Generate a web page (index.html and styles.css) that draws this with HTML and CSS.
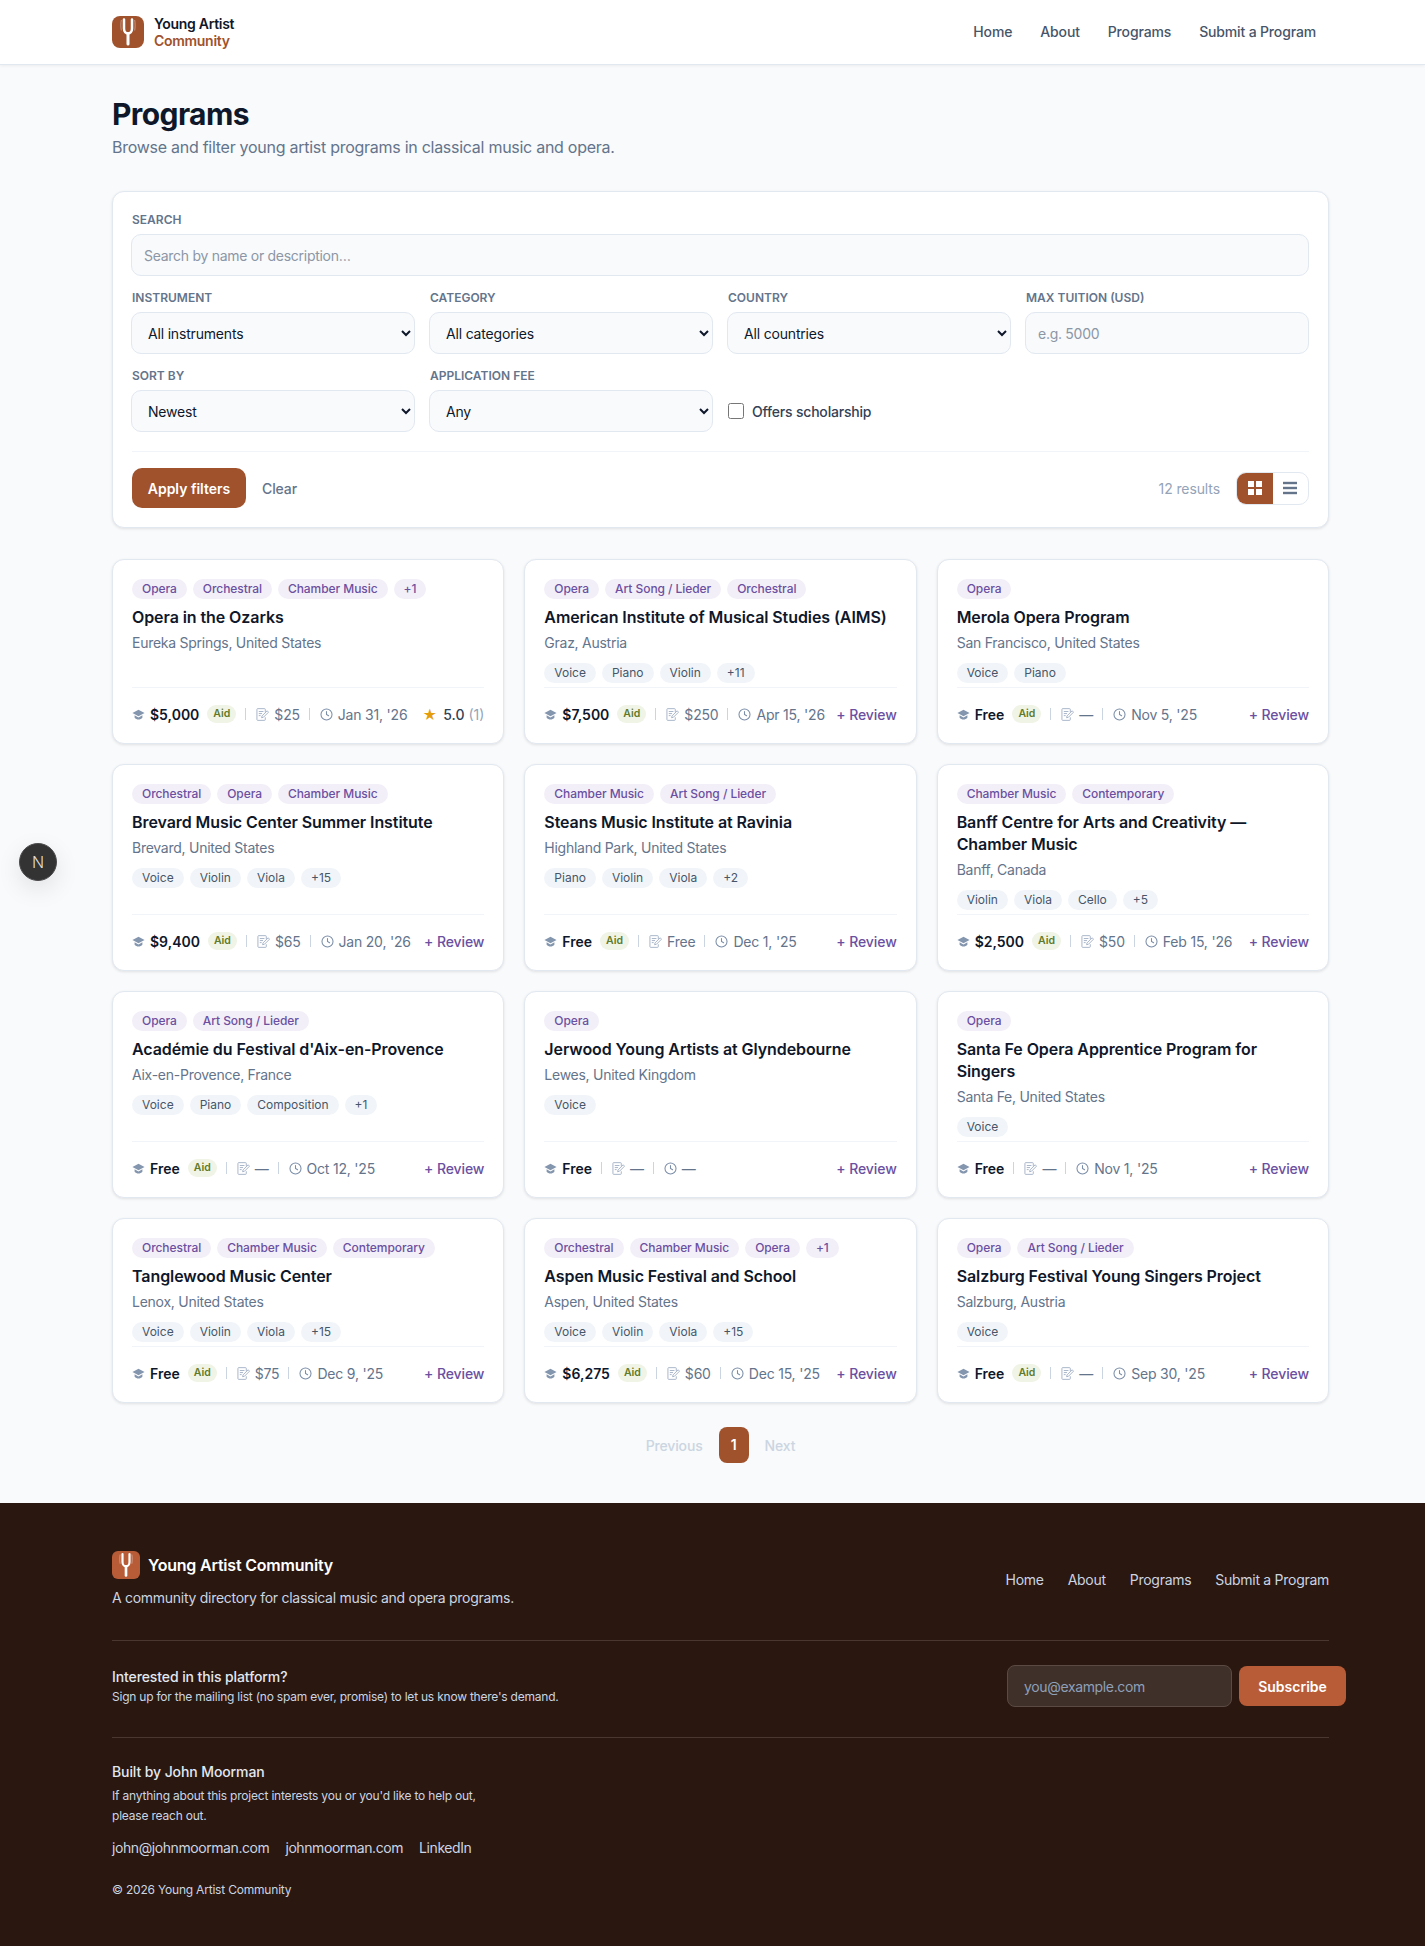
FILE: index.html
```html
<!DOCTYPE html>
<html lang="en">
<head>
  <meta charset="UTF-8" />
  <title>Programs - Young Artist Community</title>
  <link rel="stylesheet" href="styles.css">
</head>
<body>

  <svg class="sprite" width="0" height="0">
    <symbol id="fork" viewBox="0 0 32 32">
      <path d="M9.300 4c-.6 3.500-.6 7 0 10.500M22.700 4c.6 3.500.6 7 0 10.500" fill="none" stroke="#fff" stroke-opacity=".4" stroke-width="1"/>
      <path d="M12 3.500V12.500c0 3 1.800 5 4 5s4-2 4-5V3.500" fill="none" stroke="#fff" stroke-width="2.500" stroke-linecap="round"/>
      <path d="M16 17.500V28" fill="none" stroke="#fff" stroke-width="3" stroke-linecap="round"/>
    </symbol>
    <symbol id="cap" viewBox="0 0 14 14">
      <path d="M7 2 .5 5.500 7 9l6.500-3.500z" fill="#8496ae"/>
      <path d="M2.800 7.900v2.600c1 1.200 2.600 1.900 4.200 1.900s3.200-.7 4.200-1.900V7.900L7 10.200z" fill="#8496ae"/>
    </symbol>
    <symbol id="doc" viewBox="0 0 14 14">
      <path d="M10 4.500V1.500a.8.8 0 0 0-.8-.8H1.800a.8.8 0 0 0-.8.800v11a.8.8 0 0 0 .8.800h7.400a.8.8 0 0 0 .8-.8V10M3 3.800h5M3 6h3.500M3 8.200h2" fill="none" stroke="#a3b1c6" stroke-width="1"/>
      <path d="M6 10.500l.5-2 5.500-5.500 1.500 1.500L8 10z" fill="none" stroke="#a3b1c6" stroke-width="1"/>
    </symbol>
    <symbol id="clock" viewBox="0 0 16 16">
      <circle cx="8" cy="8" r="6.800" fill="none" stroke="#7b8ea8" stroke-width="1.300"/>
      <path d="M8 4.200V8l2.600 1.500" fill="none" stroke="#7b8ea8" stroke-width="1.300" stroke-linecap="round"/>
    </symbol>
  </svg>

  <header class="site-header">
    <a class="brand" href="#">
      <span class="brand-mark"><svg width="32" height="32"><use href="#fork"/></svg></span>
      <span class="brand-name">Young Artist<em>Community</em></span>
    </a>
    <nav class="site-nav">
      <a href="#">Home</a>
      <a href="#">About</a>
      <a href="#">Programs</a>
      <a href="#">Submit a Program</a>
    </nav>
  </header>

  <main class="page">
    <h1>Programs</h1>
    <p class="lead">Browse and filter young artist programs in classical music and opera.</p>

    <form class="filters">
      <div class="field field-search">
        <label>Search</label>
        <input type="text" placeholder="Search by name or description…" />
      </div>
      <div class="filter-grid">
        <div class="field">
          <label>Instrument</label>
          <select><option>All instruments</option></select>
        </div>
        <div class="field">
          <label>Category</label>
          <select><option>All categories</option></select>
        </div>
        <div class="field">
          <label>Country</label>
          <select><option>All countries</option></select>
        </div>
        <div class="field">
          <label>Max tuition (USD)</label>
          <input type="text" placeholder="e.g. 5000" />
        </div>
        <div class="field">
          <label>Sort by</label>
          <select><option>Newest</option></select>
        </div>
        <div class="field">
          <label>Application fee</label>
          <select><option>Any</option></select>
        </div>
        <label class="check"><input type="checkbox" /> Offers scholarship</label>
      </div>
      <div class="filter-actions">
        <button class="btn-apply" type="button">Apply filters</button>
        <a class="clear" href="#">Clear</a>
        <span class="count">12 results</span>
        <div class="view-toggle">
          <span class="view-btn active">
            <svg width="14" height="14" viewBox="0 0 14 14" fill="#fff"><rect width="6" height="6"/><rect x="8" width="6" height="6"/><rect y="8" width="6" height="6"/><rect x="8" y="8" width="6" height="6"/></svg>
          </span>
          <span class="view-btn">
            <svg width="14" height="14" viewBox="0 0 14 14" fill="#64748b"><rect y=".8" width="14" height="2.400"/><rect y="5.800" width="14" height="2.400"/><rect y="10.800" width="14" height="2.400"/></svg>
          </span>
        </div>
      </div>
    </form>

    <section class="cards">

      <article class="card">
        <div class="tags"><span>Opera</span><span>Orchestral</span><span>Chamber Music</span><span>+1</span></div>
        <h2>Opera in the Ozarks</h2>
        <p class="place">Eureka Springs, United States</p>
        <div class="meta">
          <svg class="ico"><use href="#cap"/></svg><b>$5,000</b><i class="aid">Aid</i>
          <u></u><svg class="ico"><use href="#doc"/></svg><span>$25</span>
          <u></u><svg class="ico"><use href="#clock"/></svg><span>Jan 31, '26</span>
          <span class="rating"><s>★</s><strong>5.0</strong> <small>(1)</small></span>
        </div>
      </article>

      <article class="card">
        <div class="tags"><span>Opera</span><span>Art Song / Lieder</span><span>Orchestral</span></div>
        <h2>American Institute of Musical Studies (AIMS)</h2>
        <p class="place">Graz, Austria</p>
        <div class="chips"><span>Voice</span><span>Piano</span><span>Violin</span><span>+11</span></div>
        <div class="meta">
          <svg class="ico"><use href="#cap"/></svg><b>$7,500</b><i class="aid">Aid</i>
          <u></u><svg class="ico"><use href="#doc"/></svg><span>$250</span>
          <u></u><svg class="ico"><use href="#clock"/></svg><span>Apr 15, '26</span>
          <a class="review" href="#">+ Review</a>
        </div>
      </article>

      <article class="card">
        <div class="tags"><span>Opera</span></div>
        <h2>Merola Opera Program</h2>
        <p class="place">San Francisco, United States</p>
        <div class="chips"><span>Voice</span><span>Piano</span></div>
        <div class="meta">
          <svg class="ico"><use href="#cap"/></svg><b>Free</b><i class="aid">Aid</i>
          <u></u><svg class="ico"><use href="#doc"/></svg><span>—</span>
          <u></u><svg class="ico"><use href="#clock"/></svg><span>Nov 5, '25</span>
          <a class="review" href="#">+ Review</a>
        </div>
      </article>

      <article class="card">
        <div class="tags"><span>Orchestral</span><span>Opera</span><span>Chamber Music</span></div>
        <h2>Brevard Music Center Summer Institute</h2>
        <p class="place">Brevard, United States</p>
        <div class="chips"><span>Voice</span><span>Violin</span><span>Viola</span><span>+15</span></div>
        <div class="meta">
          <svg class="ico"><use href="#cap"/></svg><b>$9,400</b><i class="aid">Aid</i>
          <u></u><svg class="ico"><use href="#doc"/></svg><span>$65</span>
          <u></u><svg class="ico"><use href="#clock"/></svg><span>Jan 20, '26</span>
          <a class="review" href="#">+ Review</a>
        </div>
      </article>

      <article class="card">
        <div class="tags"><span>Chamber Music</span><span>Art Song / Lieder</span></div>
        <h2>Steans Music Institute at Ravinia</h2>
        <p class="place">Highland Park, United States</p>
        <div class="chips"><span>Piano</span><span>Violin</span><span>Viola</span><span>+2</span></div>
        <div class="meta">
          <svg class="ico"><use href="#cap"/></svg><b>Free</b><i class="aid">Aid</i>
          <u></u><svg class="ico"><use href="#doc"/></svg><span>Free</span>
          <u></u><svg class="ico"><use href="#clock"/></svg><span>Dec 1, '25</span>
          <a class="review" href="#">+ Review</a>
        </div>
      </article>

      <article class="card">
        <div class="tags"><span>Chamber Music</span><span>Contemporary</span></div>
        <h2>Banff Centre for Arts and Creativity — Chamber Music</h2>
        <p class="place">Banff, Canada</p>
        <div class="chips"><span>Violin</span><span>Viola</span><span>Cello</span><span>+5</span></div>
        <div class="meta">
          <svg class="ico"><use href="#cap"/></svg><b>$2,500</b><i class="aid">Aid</i>
          <u></u><svg class="ico"><use href="#doc"/></svg><span>$50</span>
          <u></u><svg class="ico"><use href="#clock"/></svg><span>Feb 15, '26</span>
          <a class="review" href="#">+ Review</a>
        </div>
      </article>

      <article class="card">
        <div class="tags"><span>Opera</span><span>Art Song / Lieder</span></div>
        <h2>Académie du Festival d'Aix-en-Provence</h2>
        <p class="place">Aix-en-Provence, France</p>
        <div class="chips"><span>Voice</span><span>Piano</span><span>Composition</span><span>+1</span></div>
        <div class="meta">
          <svg class="ico"><use href="#cap"/></svg><b>Free</b><i class="aid">Aid</i>
          <u></u><svg class="ico"><use href="#doc"/></svg><span>—</span>
          <u></u><svg class="ico"><use href="#clock"/></svg><span>Oct 12, '25</span>
          <a class="review" href="#">+ Review</a>
        </div>
      </article>

      <article class="card">
        <div class="tags"><span>Opera</span></div>
        <h2>Jerwood Young Artists at Glyndebourne</h2>
        <p class="place">Lewes, United Kingdom</p>
        <div class="chips"><span>Voice</span></div>
        <div class="meta">
          <svg class="ico"><use href="#cap"/></svg><b>Free</b>
          <u></u><svg class="ico"><use href="#doc"/></svg><span>—</span>
          <u></u><svg class="ico"><use href="#clock"/></svg><span>—</span>
          <a class="review" href="#">+ Review</a>
        </div>
      </article>

      <article class="card">
        <div class="tags"><span>Opera</span></div>
        <h2>Santa Fe Opera Apprentice Program for Singers</h2>
        <p class="place">Santa Fe, United States</p>
        <div class="chips"><span>Voice</span></div>
        <div class="meta">
          <svg class="ico"><use href="#cap"/></svg><b>Free</b>
          <u></u><svg class="ico"><use href="#doc"/></svg><span>—</span>
          <u></u><svg class="ico"><use href="#clock"/></svg><span>Nov 1, '25</span>
          <a class="review" href="#">+ Review</a>
        </div>
      </article>

      <article class="card">
        <div class="tags"><span>Orchestral</span><span>Chamber Music</span><span>Contemporary</span></div>
        <h2>Tanglewood Music Center</h2>
        <p class="place">Lenox, United States</p>
        <div class="chips"><span>Voice</span><span>Violin</span><span>Viola</span><span>+15</span></div>
        <div class="meta">
          <svg class="ico"><use href="#cap"/></svg><b>Free</b><i class="aid">Aid</i>
          <u></u><svg class="ico"><use href="#doc"/></svg><span>$75</span>
          <u></u><svg class="ico"><use href="#clock"/></svg><span>Dec 9, '25</span>
          <a class="review" href="#">+ Review</a>
        </div>
      </article>

      <article class="card">
        <div class="tags"><span>Orchestral</span><span>Chamber Music</span><span>Opera</span><span>+1</span></div>
        <h2>Aspen Music Festival and School</h2>
        <p class="place">Aspen, United States</p>
        <div class="chips"><span>Voice</span><span>Violin</span><span>Viola</span><span>+15</span></div>
        <div class="meta">
          <svg class="ico"><use href="#cap"/></svg><b>$6,275</b><i class="aid">Aid</i>
          <u></u><svg class="ico"><use href="#doc"/></svg><span>$60</span>
          <u></u><svg class="ico"><use href="#clock"/></svg><span>Dec 15, '25</span>
          <a class="review" href="#">+ Review</a>
        </div>
      </article>

      <article class="card">
        <div class="tags"><span>Opera</span><span>Art Song / Lieder</span></div>
        <h2>Salzburg Festival Young Singers Project</h2>
        <p class="place">Salzburg, Austria</p>
        <div class="chips"><span>Voice</span></div>
        <div class="meta">
          <svg class="ico"><use href="#cap"/></svg><b>Free</b><i class="aid">Aid</i>
          <u></u><svg class="ico"><use href="#doc"/></svg><span>—</span>
          <u></u><svg class="ico"><use href="#clock"/></svg><span>Sep 30, '25</span>
          <a class="review" href="#">+ Review</a>
        </div>
      </article>

    </section>

    <nav class="pager">
      <span class="pager-off">Previous</span>
      <span class="pager-current">1</span>
      <span class="pager-off">Next</span>
    </nav>
  </main>

  <footer class="site-footer">
    <div class="foot-top">
      <div>
        <div class="foot-brand">
          <span class="foot-mark"><svg width="28" height="28"><use href="#fork"/></svg></span>
          Young Artist Community
        </div>
        <p class="foot-desc">A community directory for classical music and opera programs.</p>
      </div>
      <nav class="foot-nav">
        <a href="#">Home</a>
        <a href="#">About</a>
        <a href="#">Programs</a>
        <a href="#">Submit a Program</a>
      </nav>
    </div>
    <div class="foot-signup">
      <div>
        <h3>Interested in this platform?</h3>
        <p>Sign up for the mailing list (no spam ever, promise) to let us know there's demand.</p>
      </div>
      <form class="signup-form">
        <input type="text" placeholder="you@example.com" />
        <button type="button">Subscribe</button>
      </form>
    </div>
    <div class="foot-about">
      <h3>Built by John Moorman</h3>
      <p>If anything about this project interests you or you'd like to help out,<br>please reach out.</p>
      <div class="foot-links">
        <a href="#">john@johnmoorman.com</a>
        <a href="#">johnmoorman.com</a>
        <a href="#">LinkedIn</a>
      </div>
      <p class="copyright">© 2026 Young Artist Community</p>
    </div>
  </footer>

  <div class="dev-badge">N</div>

</body>
</html>
```

FILE: styles.css
```css
* {
  box-sizing: border-box;
}
html, body {
  overflow-x: hidden;
}
body {
  font-family: Inter, 'Liberation Sans', sans-serif;
  margin: 0;
  background-color: #f8fafc;
  color: #0f172a;
  font-size: 14px;
}
a {
  color: inherit;
  text-decoration: none;
}
.sprite {
  position: absolute;
}

/* header */
.site-header {
  height: 65px;
  background-color: #fff;
  border-bottom: 1px solid #e2e8f0;
  box-shadow: 0 1px 3px rgba(0,0,0,0.06);
  display: flex;
  align-items: center;
  justify-content: space-between;
  padding: 0 109px 0 112px;
}
.brand {
  display: flex;
  align-items: center;
  gap: 10px;
}
.brand-mark {
  width: 32px;
  height: 32px;
  border-radius: 8px;
  background-color: #a0522d;
  display: block;
}
.brand-mark svg, .foot-mark svg {
  display: block;
}
.brand-name {
  display: block;
  font-size: 14px;
  font-weight: 600;
  line-height: 17px;
  letter-spacing: -0.3px;
  padding-bottom: 1px;
}
.brand-name em {
  display: block;
  font-style: normal;
  color: #a0522d;
}
.site-nav {
  display: flex;
  gap: 28px;
  font-weight: 500;
  color: #475569;
  letter-spacing: -0.15px;
  padding-bottom: 1px;
}

/* page */
.page {
  padding: 31px 96px 0 112px;
}
h1 {
  font-size: 30px;
  line-height: 36px;
  font-weight: 700;
  letter-spacing: -0.6px;
  margin: 0;
}
.lead {
  font-size: 16px;
  line-height: 24px;
  color: #64748b;
  letter-spacing: -0.27px;
  margin: 3px 0 32px;
}

/* filters */
.filters {
  background-color: #fff;
  border: 1px solid #e2e8f0;
  border-radius: 12px;
  box-shadow: 0 1px 3px rgba(0,0,0,0.1);
  padding: 20px 19px 19px 18px;
  margin-bottom: 31px;
}
.field label {
  display: block;
  font-size: 12px;
  line-height: 16px;
  font-weight: 600;
  color: #64748b;
  text-transform: uppercase;
  padding-left: 1px;
  margin-bottom: 6px;
}
.field input, .field select {
  display: block;
  width: 100%;
  height: 42px;
  font-family: inherit;
  font-size: 14px;
  color: #0f172a;
  background-color: #f8fafc;
  border: 1px solid #e2e8f0;
  border-radius: 10px;
  padding: 0 12px;
}
.field input {
  letter-spacing: -0.28px;
}
.field select {
  letter-spacing: -0.18px;
}
.field input::placeholder {
  color: #8c96a5;
}
.field-search {
  margin-bottom: 14px;
}
.filter-grid {
  display: grid;
  grid-template-columns: repeat(4, 1fr);
  gap: 14px;
}
.check {
  display: flex;
  align-items: center;
  gap: 8px;
  font-size: 14px;
  font-weight: 500;
  color: #334155;
  letter-spacing: -0.2px;
  align-self: end;
  height: 42px;
  padding-left: 1px;
}
.check input {
  width: 16px;
  height: 16px;
  margin: 0;
}
.filter-actions {
  display: flex;
  align-items: center;
  border-top: 1px solid #f1f5f9;
  margin: 19px 0 0 1px;
  padding-top: 16px;
}
.btn-apply {
  height: 40px;
  width: 114px;
  font-family: inherit;
  font-size: 14px;
  font-weight: 600;
  color: #fff;
  background-color: #a0522d;
  border: none;
  border-radius: 10px;
}
.clear {
  margin-left: 16px;
  font-weight: 500;
  color: #64748b;
  letter-spacing: -0.1px;
}
.count {
  margin-left: auto;
  margin-right: 16px;
  color: #94a3b8;
  letter-spacing: -0.1px;
}
.view-toggle {
  display: flex;
  width: 73px;
  height: 33px;
  border: 1px solid #e2e8f0;
  border-radius: 10px;
  overflow: hidden;
}
.view-btn {
  flex: 1;
  display: flex;
  align-items: center;
  justify-content: center;
}
.view-btn.active {
  background-color: #a0522d;
}

/* program cards */
.cards {
  display: grid;
  grid-template-columns: repeat(3, 1fr);
  gap: 20px;
}
.card {
  display: flex;
  flex-direction: column;
  background-color: #fff;
  border: 1px solid #e2e8f0;
  border-radius: 12px;
  box-shadow: 0 1px 3px rgba(0,0,0,0.1);
  padding: 19px 19px 15px;
}
.tags, .chips {
  display: flex;
  gap: 6px;
}
.tags span {
  font-size: 12px;
  line-height: 20px;
  font-weight: 500;
  color: #6b4fa0;
  background-color: #f3eff8;
  border-radius: 10px;
  letter-spacing: -0.06px;
  padding: 0 10px;
}
.card h2 {
  font-size: 16px;
  line-height: 22px;
  font-weight: 600;
  letter-spacing: -0.08px;
  margin: 7px 0 0;
}
.place {
  font-size: 14px;
  line-height: 20px;
  color: #64748b;
  letter-spacing: -0.26px;
  margin: 5px 0 0;
}
.chips {
  margin-top: 10px;
  margin-bottom: 4px;
}
.chips span {
  font-size: 12px;
  line-height: 20px;
  color: #475569;
  background-color: #f1f5f9;
  border-radius: 10px;
  padding: 0 10px;
}
.meta {
  display: flex;
  align-items: center;
  margin-top: auto;
  height: 41px;
  padding-top: 12px;
  border-top: 1px solid #f1f5f9;
  color: #64748b;
}
.meta > span {
  letter-spacing: -0.2px;
}
.ico {
  width: 13px;
  height: 13px;
  flex: none;
  margin-right: 5px;
}
.meta b {
  font-weight: 600;
  color: #0f172a;
}
.aid {
  font-style: normal;
  font-size: 10.500px;
  line-height: 18px;
  font-weight: 600;
  color: #5f7a2a;
  background-color: #f0f4e6;
  border-radius: 9px;
  padding: 0 6px;
  margin-left: 8px;
}
.meta u {
  width: 1px;
  height: 12px;
  background-color: #cbd5e1;
  margin: 0 10px 0 9px;
}
.review {
  margin-left: auto;
  font-weight: 500;
  color: #6b4fa0;
  letter-spacing: -0.1px;
}
.meta > .rating {
  margin-left: auto;
  letter-spacing: 0;
}
.rating s {
  text-decoration: none;
  color: #e59e0b;
  margin-right: 6px;
}
.rating strong {
  font-weight: 500;
  color: #334155;
}
.rating small {
  font-size: 14px;
  color: #94a3b8;
}

/* pager */
.pager {
  display: flex;
  align-items: center;
  justify-content: center;
  gap: 16px;
  margin: 24px 0 40px;
  font-weight: 500;
  letter-spacing: -0.15px;
}
.pager-off {
  color: #cbd5e1;
}
.pager-current {
  width: 30px;
  height: 36px;
  line-height: 36px;
  text-align: center;
  color: #fff;
  background-color: #a0522d;
  border-radius: 8px;
  font-weight: 600;
}

/* footer */
.site-footer {
  background-color: #2a1710;
  color: #cbd5e1;
  padding: 48px 96px 0 112px;
  height: 443px;
}
.foot-top {
  display: flex;
  justify-content: space-between;
  align-items: center;
  border-bottom: 1px solid #4a3830;
  padding-bottom: 32px;
}
.foot-brand {
  display: flex;
  align-items: center;
  gap: 8px;
  font-size: 16px;
  font-weight: 600;
  color: #fff;
  letter-spacing: -0.2px;
}
.foot-mark {
  width: 28px;
  height: 28px;
  border-radius: 6px;
  background-color: #b85c38;
}
.foot-desc {
  margin: 9px 0 0;
  line-height: 20px;
  letter-spacing: -0.28px;
}
.foot-nav {
  display: flex;
  gap: 24px;
  letter-spacing: -0.28px;
}
.foot-signup {
  display: flex;
  justify-content: space-between;
  align-items: center;
  border-bottom: 1px solid #4a3830;
  padding: 24px 0 30px;
}
.site-footer h3 {
  font-size: 14px;
  line-height: 20px;
  font-weight: 500;
  color: #e2e8f0;
  letter-spacing: -0.1px;
  margin: 0;
}
.foot-signup p {
  font-size: 12px;
  line-height: 16px;
  letter-spacing: -0.22px;
  margin: 2px 0 0;
}
.signup-form {
  display: flex;
  align-items: center;
  gap: 7px;
  margin-right: -17px;
}
.signup-form input {
  width: 225px;
  height: 42px;
  font-family: inherit;
  font-size: 14px;
  color: #fff;
  background-color: #40302a;
  border: 1px solid #5a4a43;
  border-radius: 8px;
  letter-spacing: -0.35px;
  padding: 0 16px;
}
.signup-form input::placeholder {
  color: #8ea0b8;
}
.signup-form button {
  width: 107px;
  height: 40px;
  font-family: inherit;
  font-size: 14px;
  font-weight: 600;
  color: #fff;
  background-color: #b85c38;
  border: none;
  border-radius: 8px;
}
.foot-about {
  padding-top: 24px;
}
.foot-about > p {
  font-size: 12px;
  line-height: 20px;
  letter-spacing: -0.2px;
  margin: 4px 0 0;
}
.foot-links {
  display: flex;
  gap: 16px;
  margin-top: 12px;
  line-height: 20px;
  letter-spacing: -0.42px;
}
.foot-about > .copyright {
  font-size: 12px;
  line-height: 16px;
  margin-top: 24px;
}

/* dev indicator floats over the page */
.dev-badge {
  position: absolute;
  left: 19px;
  top: 843px;
  width: 38px;
  height: 38px;
  border-radius: 50%;
  background-color: #333;
  border: 1px solid #4c4a4c;
  box-shadow: 0 8px 24px rgba(0,0,0,0.1);
  color: #ddd;
  font-size: 16px;
  font-weight: 300;
  line-height: 36px;
  text-align: center;
}
```
